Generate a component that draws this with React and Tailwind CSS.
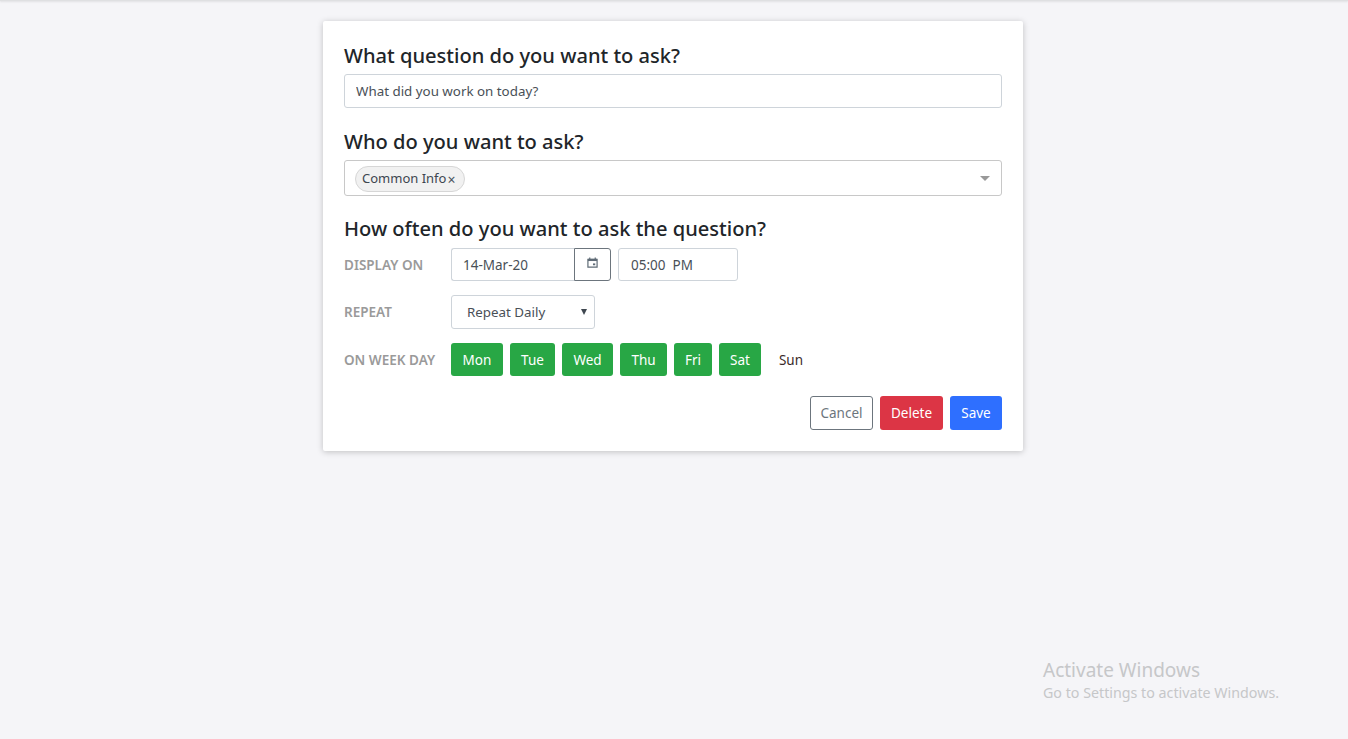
import React from 'react';

const font = "font-['Noto_Sans',sans-serif]";

function Heading({ children, className = '' }) {
  return <h4 className={`text-[20.1px] leading-[26px] font-medium text-[#212529] ${className}`}>{children}</h4>;
}

function Label({ children }) {
  return <span className="w-[107px] pt-[1px] text-[13.5px] font-semibold text-[#9a9a9a] uppercase">{children}</span>;
}

function CalendarIcon() {
  return (
    <svg width="11" height="11" viewBox="0 0 12 12" fill="none">
      <path d="M1 2.5h10v8.5H1z" stroke="#5f6b76" strokeWidth="1.3" />
      <path d="M1 2h10v2.4H1z" fill="#5f6b76" />
      <path d="M3 .5v2M9 .5v2" stroke="#5f6b76" strokeWidth="1.3" />
      <path d="M6.5 7h2.5v2H6.5z" fill="#5f6b76" />
    </svg>
  );
}

const days = [
  { name: 'Mon', width: 'w-[52px]' },
  { name: 'Tue', width: 'w-[45px]' },
  { name: 'Wed', width: 'w-[51px]' },
  { name: 'Thu', width: 'w-[47px]' },
  { name: 'Fri', width: 'w-[38px]' },
  { name: 'Sat', width: 'w-[42px]' },
];

export default function App() {
  return (
    <div className={`relative min-h-[739px] bg-[#f5f5f8] overflow-hidden ${font}`}>
      <div className="h-[1px] bg-[#dfe0e2] shadow-[0_1px_2px_rgba(0,0,0,0.12)]" />
      <div className="pr-[2px]">
        <div className="mx-auto mt-[20px] w-[700px] h-[430px] bg-white rounded-[2px] shadow-[0_1px_6px_rgba(0,0,0,0.22)] px-[21px] pt-[22px]">
          <Heading>What question do you want to ask?</Heading>
          <input
            readOnly
            value="What did you work on today?"
            className="mt-[5px] block w-full h-[34px] px-[11px] border border-[#ced4da] rounded-[3px] text-[13.35px] text-[#495057] outline-none"
          />

          <Heading className="mt-[21px]">Who do you want to ask?</Heading>
          <div className="mt-[5px] h-[36px] flex items-center justify-between pl-[10px] pr-[11px] border border-[#c8c8c8] rounded-[3px]">
            <span className="flex items-center h-[26px] mt-[1px] w-[110px] pl-[6px] pt-[1px] rounded-full border border-[#d6d6d6] bg-[#f1f1f1] text-[13px] text-[#3d4650]">
              Common Info<span className="ml-[1px] text-[14px] text-[#4a5560]">×</span>
            </span>
            <span className="w-0 h-0 border-x-[5px] border-x-transparent border-t-[5px] border-t-[#999999]" />
          </div>

          <Heading className="mt-[20px]">How often do you want to ask the question?</Heading>
          <div className="mt-[6px] flex items-center h-[33px]">
            <Label>Display on</Label>
            <div className="w-[123px] h-[33px] flex items-center pl-[11px] pt-[1px] border border-r-0 border-[#ced4da] rounded-l-[3px] text-[13.5px] text-[#495057]">14-Mar-20</div>
            <button className="w-[37px] h-[33px] flex items-center justify-center border border-[#6c757d] rounded-r-[3px] pb-[4px]">
              <CalendarIcon />
            </button>
            <div className="ml-[7px] w-[120px] h-[33px] flex items-center pl-[12px] pt-[1px] border border-[#ced4da] rounded-[3px] text-[13.5px] text-[#495057] whitespace-pre">05:00  PM</div>
          </div>

          <div className="mt-[14px] flex items-center h-[34px]">
            <Label>Repeat</Label>
            <div className="relative w-[144px] h-[34px] flex items-center pl-[15px] border border-[#ced4da] rounded-[3px] text-[13.35px] text-[#495057]">
              Repeat Daily
              <span className="absolute right-[7px] top-[13px] w-0 h-0 border-x-[3.5px] border-x-transparent border-t-[6px] border-t-[#3f4750]" />
            </div>
          </div>

          <div className="mt-[14px] flex items-center h-[33px]">
            <Label>On week day</Label>
            <div className="flex gap-[7px]">
              {days.map((d) => (
                <button key={d.name} className={`${d.width} h-[33px] pt-[1px] rounded-[3px] bg-[#28a745] text-white text-[13.5px]`}>
                  {d.name}
                </button>
              ))}
              <button className="w-[46px] h-[33px] pt-[1px] rounded-[3px] text-[#3a2a2a] text-[13.5px]">Sun</button>
            </div>
          </div>

          <div className="mt-[20px] flex justify-end gap-[7px]">
            <button className="w-[63px] h-[34px] rounded-[3px] border border-[#6c757d] text-[#6c757d] text-[13.5px]">Cancel</button>
            <button className="w-[63px] h-[34px] rounded-[3px] bg-[#dc3545] text-white text-[13.5px]">Delete</button>
            <button className="w-[52px] h-[34px] rounded-[3px] bg-[#2e6fff] text-white text-[13.5px]">Save</button>
          </div>
        </div>
      </div>

      <div className="absolute left-[1043px] top-[658px] text-[#c6c7c9] pointer-events-none">
        <div className="text-[19px] leading-[24px]">Activate Windows</div>
        <div className="text-[14.25px] leading-[20px] mt-[1px]">Go to Settings to activate Windows.</div>
      </div>
    </div>
  );
}
